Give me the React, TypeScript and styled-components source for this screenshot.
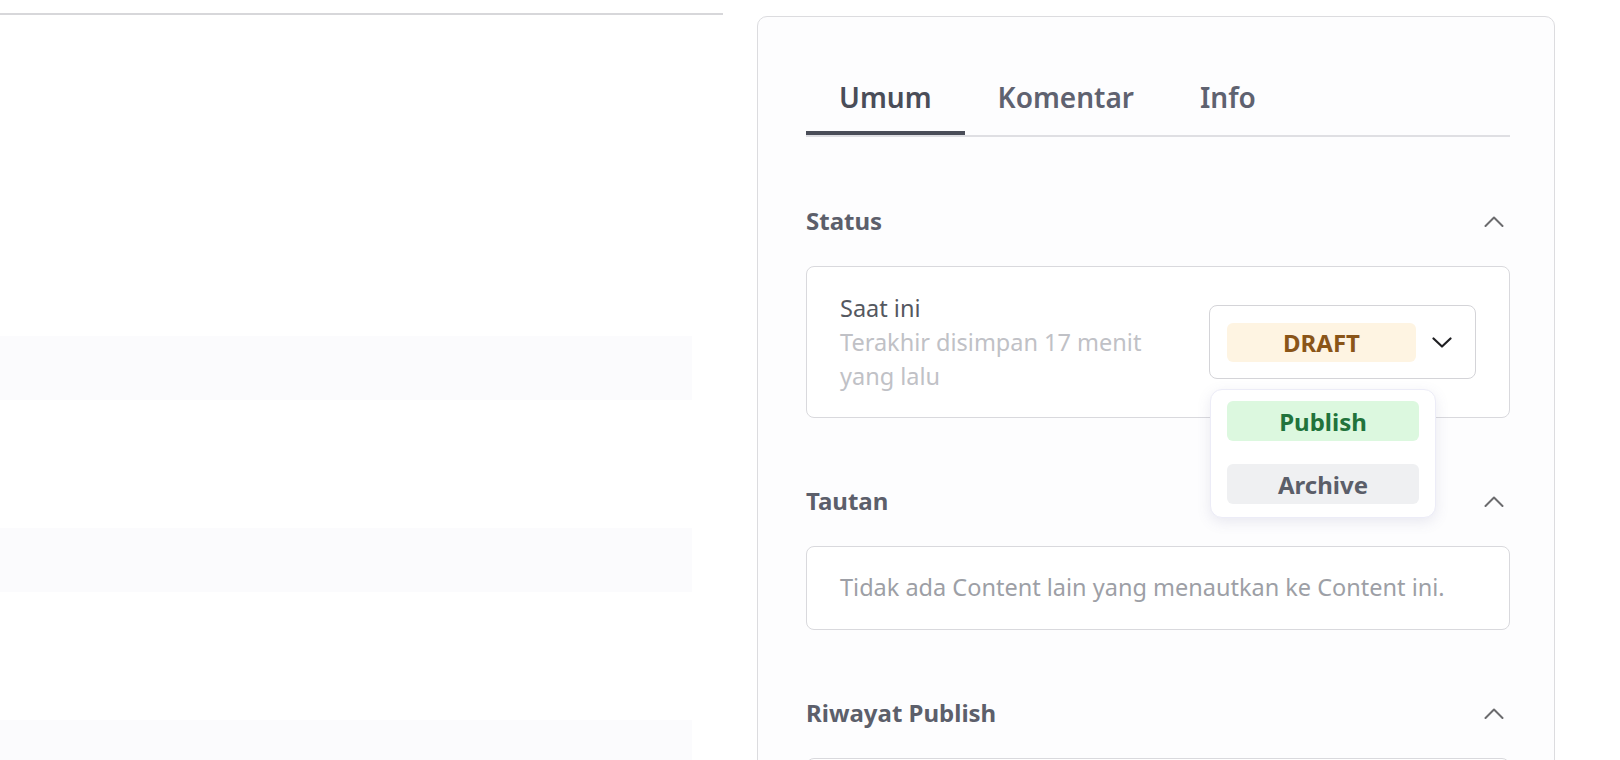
import React from "react";
import styled, { createGlobalStyle } from "styled-components";

const GlobalStyle = createGlobalStyle`
  html, body {
    margin: 0;
    padding: 0;
    background: #ffffff;
    overflow: hidden;
  }
  body {
    font-family: "Noto Sans", "Open Sans", sans-serif;
  }
  * {
    box-sizing: border-box;
  }
`;

const Page = styled.div`
  display: grid;
  grid-template-columns: 723px 798px;
  column-gap: 34px;
  align-items: start;
  height: 760px;
`;

const ListColumn = styled.div`
  margin-top: 13px;
  border-top: 2px solid #d7d7da;
  padding-top: 1px;
`;

const ListRow = styled.div<{ $striped?: boolean }>`
  width: 692px;
  height: 64px;
  background: ${(p) => (p.$striped ? "#fbfbfd" : "transparent")};
`;

const Card = styled.div`
  margin-top: 16px;
  min-height: 820px;
  border: 1.5px solid #dcdcdf;
  border-radius: 10px;
  background: #fdfdfe;
  padding: 59px 44px 0 48px;
`;

const TabList = styled.div`
  display: flex;
  border-bottom: 2px solid #dfdfe3;
`;

const Tab = styled.button<{ $active?: boolean }>`
  font-family: inherit;
  font-size: 28px;
  line-height: 42px;
  font-weight: 600;
  color: ${(p) => (p.$active ? "#4a4d58" : "#5f6270")};
  background: none;
  border: none;
  border-bottom: 4px solid ${(p) => (p.$active ? "#4a4d58" : "transparent")};
  padding: 0 33px 13px;
  cursor: pointer;
`;

const Section = styled.section<{ $gap: number }>`
  margin-top: ${(p) => p.$gap}px;
`;

const SectionHeader = styled.div`
  display: flex;
  align-items: center;
  justify-content: space-between;
  height: 36px;
`;

const SectionTitle = styled.h3`
  margin: 0;
  font-size: 24px;
  line-height: 36px;
  font-weight: 700;
  color: #5c5f6b;
`;

const Collapse = styled.span`
  display: flex;
  width: 20px;
  margin-right: 6px;
  color: #6b6b6e;
`;

const Box = styled.div`
  margin-top: 27px;
  border: 1.5px solid #d9d9dd;
  border-radius: 8px;
  background: #ffffff;
  padding: 24px 33px;
  min-height: 84px;
`;

const StatusBox = styled(Box)`
  display: flex;
  align-items: center;
  gap: 32px;
`;

const StatusText = styled.div`
  flex: 1;
  font-size: 23.5px;
  line-height: 34px;
`;

const StatusLabel = styled.div`
  color: #55585f;
`;

const StatusNote = styled.div`
  color: #c0c1c6;
`;

const Select = styled.div`
  position: relative;
  width: 267px;
  height: 74px;
  border: 1.5px solid #d4d4d8;
  border-radius: 8px;
  background: #ffffff;
  padding: 0 23px 0 17px;
  display: flex;
  align-items: center;
  gap: 16px;
`;

const Pill = styled.div<{ $tone: "draft" | "publish" | "archive" }>`
  flex: 1;
  height: ${(p) => (p.$tone === "draft" ? "39px" : "40px")};
  border-radius: 6px;
  display: flex;
  align-items: center;
  justify-content: center;
  font-size: 24px;
  font-weight: 700;
  background: ${(p) =>
    p.$tone === "draft" ? "#fef4e2" : p.$tone === "publish" ? "#dcf8df" : "#eff0f2"};
  color: ${(p) =>
    p.$tone === "draft" ? "#8a5518" : p.$tone === "publish" ? "#21733b" : "#5b5e69"};
`;

const Caret = styled.span`
  display: flex;
  color: #1f1f22;
`;

const Menu = styled.div`
  position: absolute;
  top: calc(100% + 11px);
  left: 0;
  width: 226px;
  padding: 11px 16px 13px;
  border-radius: 12px;
  border: 1px solid #ececf7;
  background: #ffffff;
  box-shadow: 0 4px 14px rgba(90, 90, 150, 0.13);
  display: flex;
  flex-direction: column;
  gap: 23px;
  z-index: 5;
`;

const MenuPill = styled(Pill)`
  flex: none;
  cursor: pointer;
`;

const EmptyText = styled.div`
  font-size: 23.5px;
  line-height: 33px;
  color: #9d9fa6;
`;

function ChevronUp() {
  return (
    <svg width="20" height="11" viewBox="0 0 20 11" fill="none">
      <polyline points="1.5,10 10,1.5 18.5,10" stroke="currentColor" strokeWidth="2" strokeLinecap="round" strokeLinejoin="round" />
    </svg>
  );
}

function ChevronDown() {
  return (
    <svg width="20" height="11" viewBox="0 0 20 11" fill="none">
      <polyline points="1.5,1.5 10,9.5 18.5,1.5" stroke="currentColor" strokeWidth="2.2" strokeLinecap="round" strokeLinejoin="round" />
    </svg>
  );
}

const rows = Array.from({ length: 12 }, (_, i) => i >= 5 && (i - 5) % 3 === 0);

export default function App() {
  return (
    <>
      <GlobalStyle />
      <Page>
        <ListColumn>
          {rows.map((striped, i) => (
            <ListRow key={i} $striped={striped} />
          ))}
        </ListColumn>

        <Card>
          <TabList>
            <Tab $active>Umum</Tab>
            <Tab>Komentar</Tab>
            <Tab>Info</Tab>
          </TabList>

          <Section $gap={66}>
            <SectionHeader>
              <SectionTitle>Status</SectionTitle>
              <Collapse>
                <ChevronUp />
              </Collapse>
            </SectionHeader>
            <StatusBox>
              <StatusText>
                <StatusLabel>Saat ini</StatusLabel>
                <StatusNote>Terakhir disimpan 17 menit yang lalu</StatusNote>
              </StatusText>
              <Select>
                <Pill $tone="draft">DRAFT</Pill>
                <Caret>
                  <ChevronDown />
                </Caret>
                <Menu>
                  <MenuPill $tone="publish">Publish</MenuPill>
                  <MenuPill $tone="archive">Archive</MenuPill>
                </Menu>
              </Select>
            </StatusBox>
          </Section>

          <Section $gap={65}>
            <SectionHeader>
              <SectionTitle>Tautan</SectionTitle>
              <Collapse>
                <ChevronUp />
              </Collapse>
            </SectionHeader>
            <Box>
              <EmptyText>Tidak ada Content lain yang menautkan ke Content ini.</EmptyText>
            </Box>
          </Section>

          <Section $gap={65}>
            <SectionHeader>
              <SectionTitle>Riwayat Publish</SectionTitle>
              <Collapse>
                <ChevronUp />
              </Collapse>
            </SectionHeader>
            <Box />
          </Section>
        </Card>
      </Page>
    </>
  );
}
